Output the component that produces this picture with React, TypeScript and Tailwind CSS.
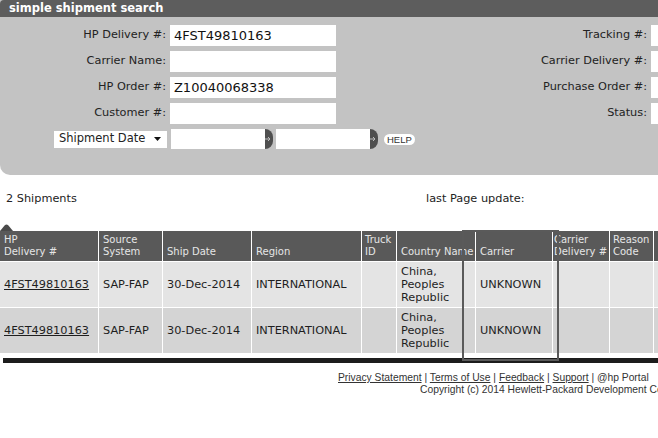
import * as React from "react";

const verdana = "font-['DejaVu_Sans',Verdana,sans-serif]";

type Row = { left: string; leftValue: string; right: string };

const searchRows: Row[] = [
  { left: "HP Delivery #:", leftValue: "4FST49810163", right: "Tracking #:" },
  { left: "Carrier Name:", leftValue: "", right: "Carrier Delivery #:" },
  { left: "HP Order #:", leftValue: "Z10040068338", right: "Purchase Order #:" },
  { left: "Customer #:", leftValue: "", right: "Status:" },
];

const columns = [
  { label: ["HP", "Delivery #"], pad: "pl-[4px]" },
  { label: ["Source", "System"], pad: "pl-[4px]" },
  { label: ["Ship Date"], pad: "pl-[4px]" },
  { label: ["Region"], pad: "pl-[4px]" },
  { label: ["Truck", "ID"], pad: "pl-[3px]" },
  { label: ["Country Name"], pad: "pl-[4px]" },
  { label: ["Carrier"], pad: "pl-[4px]" },
  { label: ["Carrier", "Delivery #"], pad: "pl-[1px]" },
  { label: ["Reason", "Code"], pad: "pl-[3px]" },
  { label: [""], pad: "pl-[4px]" },
];

const shipments = [
  {
    delivery: "4FST49810163",
    source: "SAP-FAP",
    date: "30-Dec-2014",
    region: "INTERNATIONAL",
    truck: "",
    country: ["China,", "Peoples", "Republic"],
    carrier: "UNKNOWN",
  },
  {
    delivery: "4FST49810163",
    source: "SAP-FAP",
    date: "30-Dec-2014",
    region: "INTERNATIONAL",
    truck: "",
    country: ["China,", "Peoples", "Republic"],
    carrier: "UNKNOWN",
  },
];

function GoArrow() {
  return (
    <div className="w-[8px] h-[20px] rounded-r-full bg-[#4f4f4f] flex items-center justify-start">
      <svg width="7" height="6" viewBox="0 0 7 6">
        <path d="M0 3h5M3 1l2 2-2 2" stroke="#bdbdbd" strokeWidth="1" fill="none" />
      </svg>
    </div>
  );
}

function SearchPanel() {
  return (
    <div className="bg-[#c3c3c3] rounded-bl-[10px]">
      <div className="h-[17px] bg-[#5d5d5d] rounded-tl-[4px] pl-[9px] text-[11.5px] leading-[17px] font-bold text-white">
        simple shipment search
      </div>
      <div className="pt-[8px] pb-[26px] flex flex-col gap-[5px] text-[11.3px] text-[#222]">
        {searchRows.map((r) => (
          <div key={r.left} className="flex items-center h-[21px]">
            <div className="w-[167px] text-right whitespace-nowrap">{r.left}</div>
            <div className="ml-[4px] w-[167px] h-[21px] bg-white pl-[4px] text-[13px] leading-[21px] text-[#111]">
              {r.leftValue}
            </div>
            <div className="w-[313px] text-right whitespace-nowrap">{r.right}</div>
            <div className="ml-[4px] w-[150px] h-[21px] bg-white" />
          </div>
        ))}
        <div className="flex items-center h-[20px] pl-[54px]">
          <div className="w-[113px] h-[17px] bg-white flex items-center justify-between pl-[5px] pr-[6px] text-[11.5px]">
            <span>Shipment Date</span>
            <svg width="7" height="4" viewBox="0 0 7 4">
              <path d="M0 0h7L3.5 4z" fill="#111" />
            </svg>
          </div>
          <div className="ml-[4px] w-[94px] h-[20px] bg-white" />
          <GoArrow />
          <div className="ml-[3px] w-[94px] h-[20px] bg-white" />
          <GoArrow />
          <div className="ml-[6px] h-[11px] px-[3px] rounded-full bg-white font-['Liberation_Sans',Arial,sans-serif] text-[9.5px] leading-[11px] text-[#333]">
            HELP
          </div>
        </div>
      </div>
    </div>
  );
}

function ShipmentTable() {
  const grid =
    "grid grid-cols-[98px_63px_88px_109px_34px_78px_76px_56px_43px_120px] gap-px bg-white";
  return (
    <div className="relative">
      <svg width="13" height="7" viewBox="0 0 13 7" className="block">
        <path d="M0 7L5 1Q6.5 0 8 1L13 7z" fill="#4a4a4a" />
      </svg>
      <div className={grid}>
        {columns.map((c, i) => (
          <div
            key={i}
            className={`h-[30px] bg-[#595959] flex flex-col justify-end pb-[3px] ${c.pad} text-[10px] leading-[12px] text-[#e6e6e6] whitespace-nowrap overflow-hidden`}
          >
            {c.label.map((l) => (
              <span key={l}>{l}</span>
            ))}
          </div>
        ))}
        {shipments.map((s, ri) => {
          const bg = ri === 0 ? "bg-[#e4e4e4]" : "bg-[#d4d4d4]";
          const cell = `${bg} h-[45px] flex items-center pl-[4px] text-[11.3px] leading-[13px] text-[#1e1e1e] whitespace-nowrap overflow-hidden`;
          return (
            <React.Fragment key={ri}>
              <div className={cell}>
                <span className="underline">{s.delivery}</span>
              </div>
              <div className={cell}>{s.source}</div>
              <div className={cell}>{s.date}</div>
              <div className={cell}>{s.region}</div>
              <div className={cell}>{s.truck}</div>
              <div className={`${cell} flex-col items-start justify-center`}>
                {s.country.map((c) => (
                  <span key={c}>{c}</span>
                ))}
              </div>
              <div className={cell}>{s.carrier}</div>
              <div className={cell} />
              <div className={cell} />
              <div className={cell} />
            </React.Fragment>
          );
        })}
      </div>
      {/* column drag indicator */}
      <div className="absolute left-[462px] top-[6px] w-[97px] h-[131px] border-2 border-[#5a5a5a]" />
      <div className="mt-[5px] ml-[3px] h-[5px] bg-[#1c1c1c]" />
    </div>
  );
}

export default function App() {
  return (
    <div className={`w-[658px] h-[438px] overflow-hidden bg-white ${verdana}`}>
      <div className="w-[800px]">
        <SearchPanel />
        <div className="mt-[17px] h-[14px] flex items-center text-[11.3px] text-[#222]">
          <div className="w-[426px] pl-[6px]">2 Shipments</div>
          <div>last Page update:</div>
        </div>
        <div className="mt-[18px]">
          <ShipmentTable />
        </div>
        <div className="mt-[9px] font-['Liberation_Sans',Arial,sans-serif] text-[10.3px] leading-[12px] text-[#333] whitespace-nowrap">
          <div className="pl-[338px]">
            <span className="underline">Privacy Statement</span> |{" "}
            <span className="underline">Terms of Use</span> |{" "}
            <span className="underline">Feedback</span> |{" "}
            <span className="underline">Support</span> | @hp Portal
          </div>
          <div className="pl-[420px]">
            Copyright (c) 2014 Hewlett-Packard Development Company, L.P.
          </div>
        </div>
      </div>
    </div>
  );
}
